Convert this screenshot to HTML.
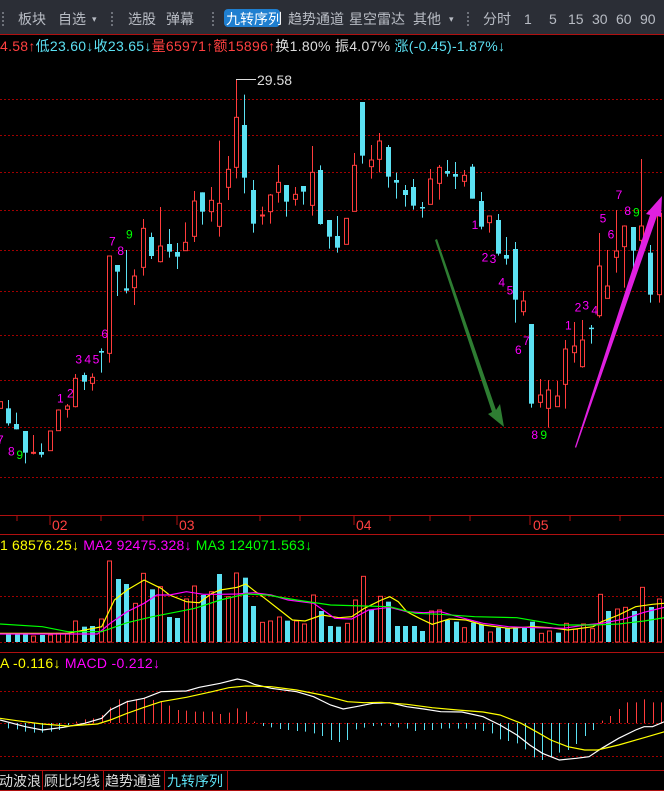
<!DOCTYPE html>
<html><head><meta charset="utf-8"><style>
html,body{margin:0;padding:0;background:#000;width:664px;height:791px;overflow:hidden}
svg{display:block}
text{font-family:"Liberation Sans","Noto Sans CJK SC",sans-serif}
</style></head><body>
<svg id="s" width="664" height="791" xmlns="http://www.w3.org/2000/svg">
<rect x="0" y="0" width="664" height="34" fill="#2b2e36"/>
<line x1="0" y1="34.5" x2="664" y2="34.5" stroke="#b01010"/>
<g fill="none" stroke="#6e727a" stroke-dasharray="2,2" stroke-width="2">
<line x1="3" y1="12" x2="3" y2="27"/><line x1="112" y1="12" x2="112" y2="27"/><line x1="213" y1="12" x2="213" y2="27"/><line x1="468" y1="12" x2="468" y2="27"/>
</g>
<g font-size="14" fill="#b8bcc4">
<text x="18" y="24">板块</text><text x="58" y="24">自选</text><text x="92" y="22" font-size="9">▾</text>
<text x="128" y="24">选股</text><text x="166" y="24">弹幕</text>
<text x="288" y="24">趋势通道</text><text x="349" y="24">星空雷达</text><text x="413" y="24">其他</text><text x="449" y="22" font-size="9">▾</text>
<text x="483" y="24">分时</text><text x="524" y="24">1</text><text x="549" y="24">5</text><text x="568" y="24">15</text><text x="592" y="24">30</text><text x="616" y="24">60</text><text x="640" y="24">90</text>
</g>
<rect x="224" y="9" width="56" height="18" rx="4" fill="#1f7fd0"/>
<text x="226" y="24" font-size="14" fill="#fff">九转序列</text>
<text x="0" y="51" font-size="14" textLength="505" lengthAdjust="spacing"><tspan fill="#ff4040">4.58↑</tspan><tspan fill="#5ce1f3">低23.60↓收23.65↓</tspan><tspan fill="#ff4040">量65971↑额15896↑</tspan><tspan fill="#ddd">换1.80% 振4.07% </tspan><tspan fill="#5ce1f3">涨(-0.45)-1.87%↓</tspan></text>
<g id="grid" stroke="#a00000" stroke-dasharray="2,2" stroke-width="1"></g>
<g id="cand"></g>
<line x1="236" y1="79.5" x2="256" y2="79.5" stroke="#ddd"/>
<text x="257" y="85" font-size="14" fill="#ddd">29.58</text>
<g id="nums" font-size="12"></g>
<polygon points="435,240 437,239 496,410 500,404 504,427 488,414 492,412" fill="#2e7d32"/>
<polygon points="576,448 575,447 650,215 646,214 662,196 661,217 657,216" fill="#e020e0"/>
<line x1="0" y1="515.5" x2="664" y2="515.5" stroke="#b01010"/>
<line x1="0" y1="534.5" x2="664" y2="534.5" stroke="#b01010"/>
<g stroke="#b01010"><line x1="17" y1="515" x2="17" y2="521"/><line x1="50" y1="515" x2="50" y2="525"/><line x1="101" y1="515" x2="101" y2="521"/><line x1="143" y1="515" x2="143" y2="521"/><line x1="177" y1="515" x2="177" y2="525"/><line x1="354" y1="515" x2="354" y2="525"/><line x1="530" y1="515" x2="530" y2="525"/><line x1="260" y1="515" x2="260" y2="521"/><line x1="300" y1="515" x2="300" y2="521"/><line x1="390" y1="515" x2="390" y2="521"/><line x1="430" y1="515" x2="430" y2="521"/><line x1="470" y1="515" x2="470" y2="521"/><line x1="570" y1="515" x2="570" y2="521"/><line x1="620" y1="515" x2="620" y2="521"/></g>
<g font-size="14" fill="#ff4040"><text x="52" y="530">02</text><text x="179" y="530">03</text><text x="356" y="530">04</text><text x="533" y="530">05</text></g>
<text x="0" y="550" font-size="14" textLength="312" lengthAdjust="spacing"><tspan fill="#ffff00">1 68576.25↓ </tspan><tspan fill="#ff00ff">MA2 92475.328↓ </tspan><tspan fill="#00ff00">MA3 124071.563↓</tspan></text>
<g stroke="#a00000" stroke-dasharray="2,2"><line x1="0" y1="596.5" x2="664" y2="596.5"/><line x1="0" y1="642.5" x2="664" y2="642.5"/></g>
<g id="vol"></g>
<line x1="0" y1="652.5" x2="664" y2="652.5" stroke="#b01010"/>
<text x="0" y="668" font-size="14" textLength="160" lengthAdjust="spacing"><tspan fill="#ffff00">A -0.116↓ </tspan><tspan fill="#ff00ff">MACD -0.212↓</tspan></text>
<g stroke="#a00000" stroke-dasharray="2,2"><line x1="0" y1="691.5" x2="664" y2="691.5"/><line x1="0" y1="723.5" x2="664" y2="723.5"/><line x1="0" y1="756.5" x2="664" y2="756.5"/></g>
<g id="macd"></g>
<line x1="0" y1="770.5" x2="664" y2="770.5" stroke="#b01010"/>
<line x1="0" y1="790.5" x2="664" y2="790.5" stroke="#b01010"/>
<g stroke="#b01010"><line x1="42.5" y1="770" x2="42.5" y2="791"/><line x1="103.5" y1="770" x2="103.5" y2="791"/><line x1="164.5" y1="770" x2="164.5" y2="791"/><line x1="227.5" y1="770" x2="227.5" y2="791"/></g>
<g font-size="14"><text x="-1" y="786" fill="#ddd">动波浪</text><text x="44" y="786" fill="#ddd">顾比均线</text><text x="105" y="786" fill="#ddd">趋势通道</text><text x="167" y="786" fill="#5ce1f3">九转序列</text></g>
</svg>
<script>
var NS="http://www.w3.org/2000/svg";
function el(p,t,a){var e=document.createElementNS(NS,t);for(var k in a)e.setAttribute(k,a[k]);document.getElementById(p).appendChild(e);return e;}
var R="#ff3c3c",C="#5ce1f3";
[99,135,172,210,250,291,335,380,427,477].forEach(function(y){el("grid","line",{x1:0,x2:664,y1:y+.5,y2:y+.5});});
var L=[[0,'r',1025,1045,1025,1045],[25,'c',1045,1090,1020,1097],[48,'c',1092,1108,1058,1108],[75,'c',1113,1178,1113,1210],[100,'r',1177,1180,1125,1183],[124,'c',1176,1184,1150,1192],[150,'r',1113,1172,1113,1172],[175,'r',1050,1112,1048,1112],[200,'r',1038,1048,1032,1073],[226,'r',955,1040,942,1042],[252,'c',945,965,938,990],[277,'r',952,970,940,992],[303,'c',873,878,865,938],[328,'r',588,880,588,908],[352,'c',615,635,615,708],[379,'c',685,692,570,700],[403,'r',648,683,628,735],[430,'r',505,622,477,647],[454,'c',531,588,518,597],[480,'r',558,605,441,607],[506,'c',552,575,507,593],[532,'c',576,590,549,627],[556,'r',547,572,487,572],[583,'r',423,529,393,546],[607,'c',397,455,397,494],[632,'r',421,455,381,485],[658,'r',430,499,242,530],[683,'r',328,382,288,420],[709,'r',172,322,58,355],[733,'c',195,353,104,400],[760,'c',390,491,360,518],[785,'r',465,468,440,494],[811,'r',405,455,402,491],[835,'r',367,397,315,428],[859,'c',375,425,375,470],[886,'r',403,418,381,437],[910,'c',378,395,378,434],[937,'r',337,436,258,467],[961,'c',330,492,316,494],[988,'c',480,530,480,566]];
var Rr=[[15,'c',528,563,468,578],[43,'r',475,553,475,553],[67,'r',316,454,279,454],[91,'c',126,287,126,311],[118,'r',300,320,255,356],[142,'r',243,298,219,337],[169,'c',261,350,255,383],[193,'c',360,368,338,416],[220,'c',390,405,375,440],[244,'c',381,437,357,449],[270,'c',441,444,426,473],[295,'r',357,433,327,433],[322,'r',322,370,315,419],[346,'c',333,341,300,350],[370,'c',342,350,306,387],[397,'r',346,364,330,380],[421,'c',320,416,312,416],[448,'c',423,500,396,508],[472,'r',468,488,468,518],[499,'c',480,581,462,587],[523,'c',585,596,531,614],[550,'c',567,719,546,788],[574,'r',723,755,693,767],[598,'c',792,1031,792,1043],[625,'r',1005,1027,957,1043],[649,'r',990,1045,960,1103],[676,'r',1008,1040,963,1040],[700,'r',867,973,840,1046],[727,'r',858,878,786,908],[751,'r',840,920,780,923],[778,'c',803,807,795,851],[802,'r',618,767,519,773],[826,'r',678,715,570,715],[853,'r',573,592,450,638],[877,'r',498,560,496,683],[904,'c',501,572,501,630],[928,'r',498,541,297,555],[955,'c',578,704,555,728],[980,'r',460,704,460,728]];
function draw(a,off){a.forEach(function(c){var x=Math.round(off+c[0]/3)+.5,bt=60+c[2]/3,bb=60+c[3]/3,wt=60+c[4]/3,wb=60+c[5]/3,col=c[1]=='r'?R:C;
el("cand","line",{x1:x,x2:x,y1:wt,y2:wb,stroke:col});
if(c[1]=='r')el("cand","rect",{x:x-2,y:bt,width:4,height:Math.max(1,bb-bt),fill:"#000",stroke:col});
else el("cand","rect",{x:x-2.5,y:bt,width:5,height:Math.max(1.5,bb-bt),fill:col});});}
draw(L,0);draw(Rr,332);
var M="#ff00ff",G="#00ff00";
var N=[[0,0,1140,"7",M],[0,33,1175,"8",M],[0,58,1185,"9",G],[0,180,1015,"1",M],[0,210,1000,"2",M],[0,235,898,"3",M],[0,262,898,"4",M],[0,287,898,"5",M],[0,313,822,"6",M],[0,336,545,"7",M],[0,361,573,"8",M],[0,387,523,"9",G],
[332,428,495,"1",M],[332,458,592,"2",M],[332,482,597,"3",M],[332,508,668,"4",M],[332,533,692,"5",M],[332,558,870,"6",M],[332,582,843,"7",M],[332,607,1125,"8",M],[332,634,1125,"9",G],[332,708,797,"1",M],[332,737,743,"2",M],[332,760,737,"3",M],[332,787,752,"4",M],[332,812,475,"5",M],[332,836,523,"6",M],[332,860,405,"7",M],[332,886,453,"8",M],[332,912,458,"9",G]];
N.forEach(function(n){var t=el("nums","text",{x:n[0]+n[1]/3-3,y:60+n[2]/3+4,fill:n[4]});t.textContent=n[3];});
var V=[[18,'c',403],[40,'c',403],[60,'c',403],[78,'r',408],[98,'c',405],[118,'r',405],[138,'r',400],[158,'r',400],[178,'r',363],[198,'c',380],[218,'c',378],[238,'r',357],[258,'r',183],[278,'c',237],[298,'c',252],[318,'r',310],[338,'r',220],[358,'c',268],[378,'r',260],[398,'c',351],[418,'c',354],[438,'r',297],[458,'r',258],[478,'c',285],[498,'r',275],[518,'c',222],[538,'r',290],[558,'r',219],[578,'c',233],[598,'c',318],[618,'r',367],[638,'r',363],[658,'r',351],[678,'c',362],[698,'r',363],[718,'r',372],[738,'r',285],[758,'c',333],[778,'c',378],[798,'c',380],[818,'r',370],[838,'r',300],[856,'r',229],[876,'c',330],[896,'r',289],[916,'c',305],[936,'c',378],[956,'c',378],[976,'c',378],[996,'c',393],[1016,'r',333],[1036,'r',330],[1056,'c',360],[1076,'c',365],[1096,'r',383],[1116,'c',368],[1136,'c',373],[1156,'r',396],[1176,'c',383],[1196,'c',385],[1216,'c',383],[1236,'c',383],[1256,'c',365],[1276,'r',400],[1296,'r',393],[1316,'c',398],[1336,'r',370],[1356,'r',388],[1376,'r',372],[1396,'r',386],[1416,'r',283],[1436,'c',333],[1456,'r',327],[1476,'r',322],[1496,'c',333],[1516,'r',262],[1536,'c',321],[1556,'r',297]];
V.forEach(function(v){var x=Math.round(v[0]/2.36),t=500+v[2]/3,b=642;
if(v[1]=='r')el("vol","rect",{x:x-1.5,y:t,width:4,height:b-t,fill:"#000",stroke:R});else el("vol","rect",{x:x-2,y:t,width:5,height:b-t,fill:C});});
function pl(g,pts,col,yo){var s=[];for(var i=0;i<pts.length;i+=2)s.push((pts[i]/2.36).toFixed(1)+","+(yo+pts[i+1]/3).toFixed(1));el(g,"polyline",{points:s.join(" "),fill:"none",stroke:col,"stroke-width":1.2});}
pl("vol",[0,400,160,400,240,380,270,300,300,270,340,240,380,265,400,285,440,305,470,308,500,280,520,270,560,262,580,252,600,272,620,290,660,330,690,360,720,363,760,345,800,353,830,350,860,325,900,300,920,290,940,305,960,335,990,355,1020,373,1060,357,1100,360,1140,375,1200,385,1260,380,1300,383,1340,390,1400,380,1420,365,1460,345,1500,320,1540,313,1568,310],"#ffff00",500);
pl("vol",[0,402,230,402,260,370,300,335,340,310,370,285,400,285,440,275,480,283,520,283,560,282,600,278,640,285,680,300,740,310,790,355,830,357,870,330,920,322,960,335,1000,338,1040,335,1080,350,1140,370,1200,380,1260,383,1330,385,1380,375,1420,370,1470,358,1520,337,1568,322],"#ff00ff",500);
pl("vol",[0,372,100,380,160,395,240,395,300,368,360,350,420,335,460,325,520,300,580,282,630,285,700,300,780,315,860,318,920,320,980,340,1040,343,1120,350,1220,353,1320,375,1400,375,1460,372,1520,363,1568,353],"#00ff00",500);
var H=[[20,235],[40,238],[60,245],[80,248],[100,248],[120,245],[140,240],[160,225],[180,215],[200,208],[220,205],[240,195],[260,172],[280,148],[300,152],[320,148],[340,145],[360,150],[380,155],[400,167],[420,180],[440,182],[460,185],[480,185],[500,185],[520,192],[540,188],[560,175],[580,185],[600,215],[620,228],[640,232],[660,237],[680,240],[700,243],[720,245],[740,250],[760,258],[780,270],[800,276],[820,270],[840,238],[860,233],[880,228],[900,227],[920,228],[940,232],[960,236],[980,243],[1000,240],[1020,240],[1040,236],[1060,235],[1080,236],[1100,236],[1120,238],[1140,243],[1160,250],[1180,268],[1200,273],[1220,280],[1240,298],[1260,322],[1280,330],[1300,320],[1320,308],[1340,300],[1360,282],[1380,258],[1400,240],[1420,212],[1440,198],[1460,177],[1480,157],[1500,157],[1520,148],[1540,157],[1560,157]];
H.forEach(function(h){var x=Math.round(h[0]/2.36)+.5,y=650+h[1]/3,z=723;el("macd","line",{x1:x,x2:x,y1:z,y2:y,stroke:y<z?R:C});});
pl("macd",[0,210,60,230,100,240,150,232,200,220,240,205,260,180,300,155,340,145,380,125,440,123,470,112,520,100,560,87,580,92,600,103,640,115,700,125,740,140,780,165,810,177,840,170,880,160,920,158,960,170,1000,177,1040,185,1090,186,1140,200,1180,225,1220,255,1250,285,1280,310,1320,330,1360,325,1390,320,1420,295,1460,265,1500,240,1520,230,1540,230,1568,215],"#ffffff",650);
pl("macd",[0,205,40,212,100,222,160,228,230,222,260,210,300,190,340,172,380,155,440,142,500,125,540,113,580,108,640,110,700,120,760,135,820,155,860,158,900,157,960,163,1020,173,1080,180,1140,186,1180,195,1230,220,1270,248,1300,270,1340,290,1380,300,1410,300,1460,285,1520,263,1568,245],"#ffff00",650);
</script>
</body></html>
